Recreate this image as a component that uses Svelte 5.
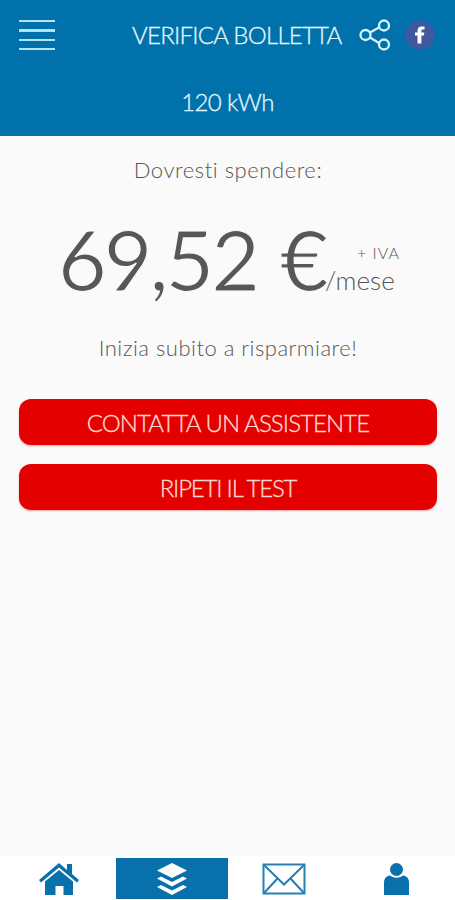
<script>
  let consumption = "120 kWh";
  let price = "69,52";
  let activeTab = "offers";

  const tabs = ["home", "offers", "mail", "profile"];

  const selectTab = (tab) => {
    activeTab = tab;
  };
</script>

<div class="app">
  <header>
    <div class="toolbar">
      <button class="menu-button" aria-label="Menu">
        <span></span>
        <span></span>
        <span></span>
        <span></span>
      </button>
      <h1>VERIFICA BOLLETTA</h1>
      <button class="share-button" aria-label="Condividi">
        <svg width="32" height="32" viewBox="0 0 32 32">
          <g fill="none" stroke="#d9f3fb" stroke-width="2.3">
            <path d="M11 13.5 20 8.5M11 18.5 20 24" />
            <circle cx="6.5" cy="16" r="5" />
            <circle cx="25" cy="6.5" r="5" />
            <circle cx="25" cy="25.5" r="5" />
          </g>
        </svg>
      </button>
      <button class="facebook-button" aria-label="Facebook">
        <svg width="30" height="32" viewBox="0 0 30 32">
          <circle cx="15" cy="16" r="14.5" fill="#40589f" />
          <path
            d="M12.5 24.5v-8H10v-3h2.5V12c0-3.2 1.6-4.5 4.2-4.5h2.8v3h-1.7c-1 0-1.4.5-1.4 1.5v1.5h2.9l-.4 3h-2.5v8z"
            fill="#fff"
          />
        </svg>
      </button>
    </div>
    <p class="consumption">{consumption}</p>
  </header>

  <main>
    <p class="intro">Dovresti spendere:</p>
    <div class="price">
      <span class="amount">{price}</span>
      <span class="currency">€</span>
      <div class="unit">
        <span class="tax">+ IVA</span>
        <span class="period">/mese</span>
      </div>
    </div>
    <p class="hint">Inizia subito a risparmiare!</p>
    <button class="action contact">CONTATTA UN ASSISTENTE</button>
    <button class="action repeat">RIPETI IL TEST</button>
  </main>

  <nav>
    {#each tabs as tab}
      <button
        class="tab"
        class:active={activeTab === tab}
        aria-label={tab}
        on:click={() => selectTab(tab)}
      >
        {#if tab === "home"}
          <svg width="40" height="32" viewBox="0 0 40 32" fill="#0871ac">
            <path d="M19 0 27 7V1h5v10l7 6-2 2.5L19 4.5 1 19.5-1 17z" />
            <path d="M19 7 33 18.5V32h-9.5v-9h-8v9H5V18.5z" />
          </svg>
        {:else if tab === "offers"}
          <svg width="32" height="32" viewBox="0 0 32 32" fill="#fff">
            <path d="M16 0 31 7.5 16 15 1 7.5z" />
            <path d="M1 15.5 5 13.5 16 19 27 13.5 31 15.5 16 23.5z" />
            <path d="M1 24 5 22 16 27.5 27 22 31 24 16 32z" />
          </svg>
        {:else if tab === "mail"}
          <svg width="44" height="32" viewBox="0 0 44 32">
            <g fill="none" stroke="#2780b3" stroke-width="2">
              <rect x="1.5" y="1.5" width="41" height="29" />
              <path d="M2 2 22 21.5 42 2M2 30 15.5 15.5M42 30 28.5 15.5" />
            </g>
          </svg>
        {:else}
          <svg width="26" height="32" viewBox="0 0 26 32" fill="#0871ac">
            <circle cx="13.5" cy="6.5" r="6.5" />
            <path d="M1 32V20c0-4.5 2-7 6-7.5 4 3 9 3 13 0 4 .5 6 3 6 7.5v12z" />
          </svg>
        {/if}
      </button>
    {/each}
  </nav>
</div>

<style>
  :global(body) {
    margin: 0;
    background: #fafafa;
  }

  .app {
    display: flex;
    flex-direction: column;
    height: 900px;
    font-family: Lato, "Open Sans", sans-serif;
    font-weight: 300;
    color: #575757;
  }

  h1,
  p {
    margin: 0;
    font-weight: 300;
    white-space: nowrap;
  }

  button {
    padding: 0;
    border: none;
    background: none;
    font-family: inherit;
    font-weight: inherit;
  }

  svg {
    display: block;
    overflow: visible;
  }

  header {
    height: 136px;
    background: #0071aa;
    color: #e3f7fb;
  }

  .toolbar {
    display: flex;
    align-items: center;
    height: 70px;
    padding: 0 20px 0 19px;
  }

  .menu-button {
    display: flex;
    flex-direction: column;
    gap: 7px;
    width: 36px;
  }

  .menu-button span {
    height: 2.2px;
    background: #b3e4f5;
  }

  h1 {
    width: 211px;
    margin-left: 77px;
    font-size: 24px;
    line-height: 30px;
    letter-spacing: -0.74px;
    -webkit-text-stroke: 0.3px currentColor;
  }

  .share-button {
    margin-left: 16px;
  }

  .facebook-button {
    margin-left: auto;
  }

  .consumption {
    padding-top: 17px;
    font-size: 24px;
    line-height: 30px;
    letter-spacing: -0.6px;
    text-align: center;
    -webkit-text-stroke: 0.3px currentColor;
  }

  main {
    display: flex;
    flex: 1;
    flex-direction: column;
    padding: 19px 18px 0 19px;
  }

  .intro,
  .hint {
    font-size: 22px;
    line-height: 30px;
    letter-spacing: 0.55px;
    text-align: center;
  }

  .price {
    display: flex;
    height: 110px;
    margin-top: 19px;
    padding-left: 39px;
    line-height: 110px;
    white-space: nowrap;
  }

  .amount,
  .currency {
    font-size: 84px;
    font-weight: 400;
    -webkit-text-stroke: 1.2px #fafafa;
  }

  .amount {
    width: 223px;
    letter-spacing: -3px;
  }

  .currency {
    width: 45px;
    margin-left: -1px;
  }

  .unit {
    display: flex;
    flex-direction: column;
    padding-top: 37px;
  }

  .tax {
    padding-left: 32px;
    font-size: 16px;
    line-height: 24px;
    letter-spacing: 1px;
  }

  .period {
    font-size: 26px;
    line-height: 30px;
  }

  .hint {
    margin-top: 19px;
    letter-spacing: 0.5px;
  }

  .action {
    height: 46px;
    border-radius: 12px;
    background: #e50000;
    box-shadow: 0 1px 2px #e9a5a5;
    color: #ffd9d3;
    font-size: 24px;
    line-height: 48px;
    letter-spacing: -0.9px;
    white-space: nowrap;
    -webkit-text-stroke: 0.3px currentColor;
  }

  .contact {
    margin-top: 36px;
  }

  .repeat {
    margin-top: 19px;
    letter-spacing: -1.2px;
  }

  nav {
    display: grid;
    grid-template-columns: repeat(4, 112px);
    justify-content: center;
    height: 41px;
    padding: 2px 0 1px;
    background: #fff;
  }

  .tab {
    display: flex;
    align-items: center;
    justify-content: center;
  }

  .active {
    background: #0871ac;
  }
</style>
